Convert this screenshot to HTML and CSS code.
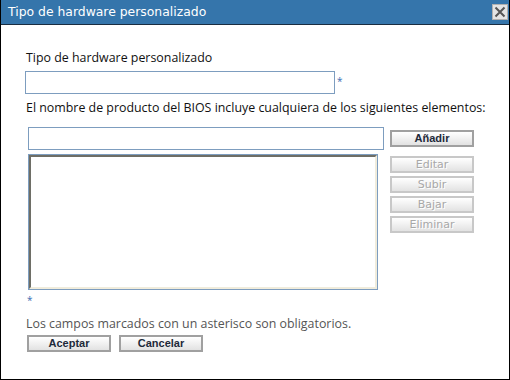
FILE: index.html
```html
<!DOCTYPE html>
<html lang="es">
<head>
  <meta charset="UTF-8">
  <title>Tipo de hardware personalizado</title>
  <link rel="stylesheet" href="styles.css">
</head>
<body>
  <div class="dialog">
    <div class="dialog__title">
      <span>Tipo de hardware personalizado</span>
      <span class="dialog__close">
        <svg width="12" height="12" viewBox="0 0 12 12">
          <path d="M1.5 1.5 L10.5 10.5 M10.5 1.5 L1.5 10.5" stroke="#555" stroke-width="2"/>
        </svg>
      </span>
    </div>

    <div class="dialog__body">
      <label class="field-label">Tipo de hardware personalizado</label>
      <div class="row row--name">
        <input class="text-input text-input--name" type="text">
        <span class="required">*</span>
      </div>

      <label class="field-label field-label--bios">El nombre de producto del BIOS incluye cualquiera de los siguientes elementos:</label>

      <div class="editor">
        <div class="editor__left">
          <input class="text-input text-input--item" type="text">
          <div class="listbox"><div class="listbox__inner"></div></div>
        </div>
        <div class="editor__buttons">
          <button class="btn btn--add">Añadir</button>
          <button class="btn btn--small" disabled>Editar</button>
          <button class="btn btn--small" disabled>Subir</button>
          <button class="btn btn--small" disabled>Bajar</button>
          <button class="btn btn--small" disabled>Eliminar</button>
        </div>
      </div>

      <div class="required required--list">*</div>

      <p class="note">Los campos marcados con un asterisco son obligatorios.</p>

      <div class="actions">
        <button class="btn btn--action">Aceptar</button>
        <button class="btn btn--action">Cancelar</button>
      </div>
    </div>
  </div>
</body>
</html>
```

FILE: styles.css
```css
* {
  box-sizing: border-box;
}

body {
  margin: 0;
  background: #fff;
  font-family: "Open Sans", "DejaVu Sans", sans-serif;
}

.dialog {
  width: 510px;
  height: 380px;
  border: 1px solid #000;
  border-top: none;
  background: #fff;
}

.dialog__title {
  height: 25px;
  background: #3575ab;
  border-bottom: 1px solid #1a2d40;
  color: #fff;
  font-family: "DejaVu Sans", sans-serif;
  font-size: 12.4px;
  display: flex;
  align-items: center;
  justify-content: space-between;
  padding: 0 1px 1px 7px;
}

.dialog__close {
  width: 16px;
  height: 16px;
  background: #e4e4e4;
  border: 1px solid #b0b0b0;
  display: flex;
  align-items: center;
  justify-content: center;
}

.dialog__body {
  padding: 24px 0 0 24px;
  color: #111;
  font-size: 12.4px;
}

.field-label {
  display: block;
  line-height: 17px;
  padding-left: 1px;
}

.row--name {
  display: flex;
  align-items: flex-start;
  margin-top: 5px;
}

.text-input {
  height: 23px;
  border: 1px solid #7d9dbf;
  background: #fff;
  margin: 0;
  padding: 0 3px;
  font: inherit;
}

.text-input--name {
  width: 310px;
}

.required {
  color: #3a6db2;
  font-size: 10px;
  line-height: 10px;
  padding: 5px 0 0 2px;
}

.field-label--bios {
  margin-top: 5px;
}

.editor {
  display: flex;
  margin-top: 11px;
  padding-left: 3px;
}

.editor__left {
  width: 356px;
  display: flex;
  flex-direction: column;
}

.text-input--item {
  width: 356px;
}

.listbox {
  width: 350px;
  height: 136px;
  margin-top: 4px;
  border: 1px solid #7d9dbf;
}

.listbox__inner {
  height: 100%;
  border: 2px solid;
  border-color: #6e6e66 #f0ecdc #f0ecdc #6e6e66;
}

.editor__buttons {
  display: flex;
  flex-direction: column;
  gap: 3px;
  padding: 3px 0 0 6px;
}

.btn {
  width: 84px;
  height: 17px;
  margin: 0;
  padding: 0;
  border: 2px solid #a0a0a0;
  background: linear-gradient(#ffffff, #e2e2e2);
  font-family: "Liberation Sans", Arial, sans-serif;
  font-size: 11px;
  font-weight: bold;
  color: #1e2a3a;
  line-height: 13px;
}

.btn--add {
  margin-bottom: 6px;
}

.btn:disabled {
  border-color: #c8c8c8;
  color: #a8a8a8;
  font-family: "DejaVu Sans", sans-serif;
  font-weight: normal;
  text-shadow: 1px 1px 0 #fff;
}

.required--list {
  padding: 5px 0 0 2px;
  height: 14px;
  display: block;
}

.note {
  margin: 11px 0 0 1px;
  color: #555;
  line-height: 17px;
}

.actions {
  display: flex;
  gap: 8px;
  margin-top: 3px;
  padding-left: 2px;
}
```
